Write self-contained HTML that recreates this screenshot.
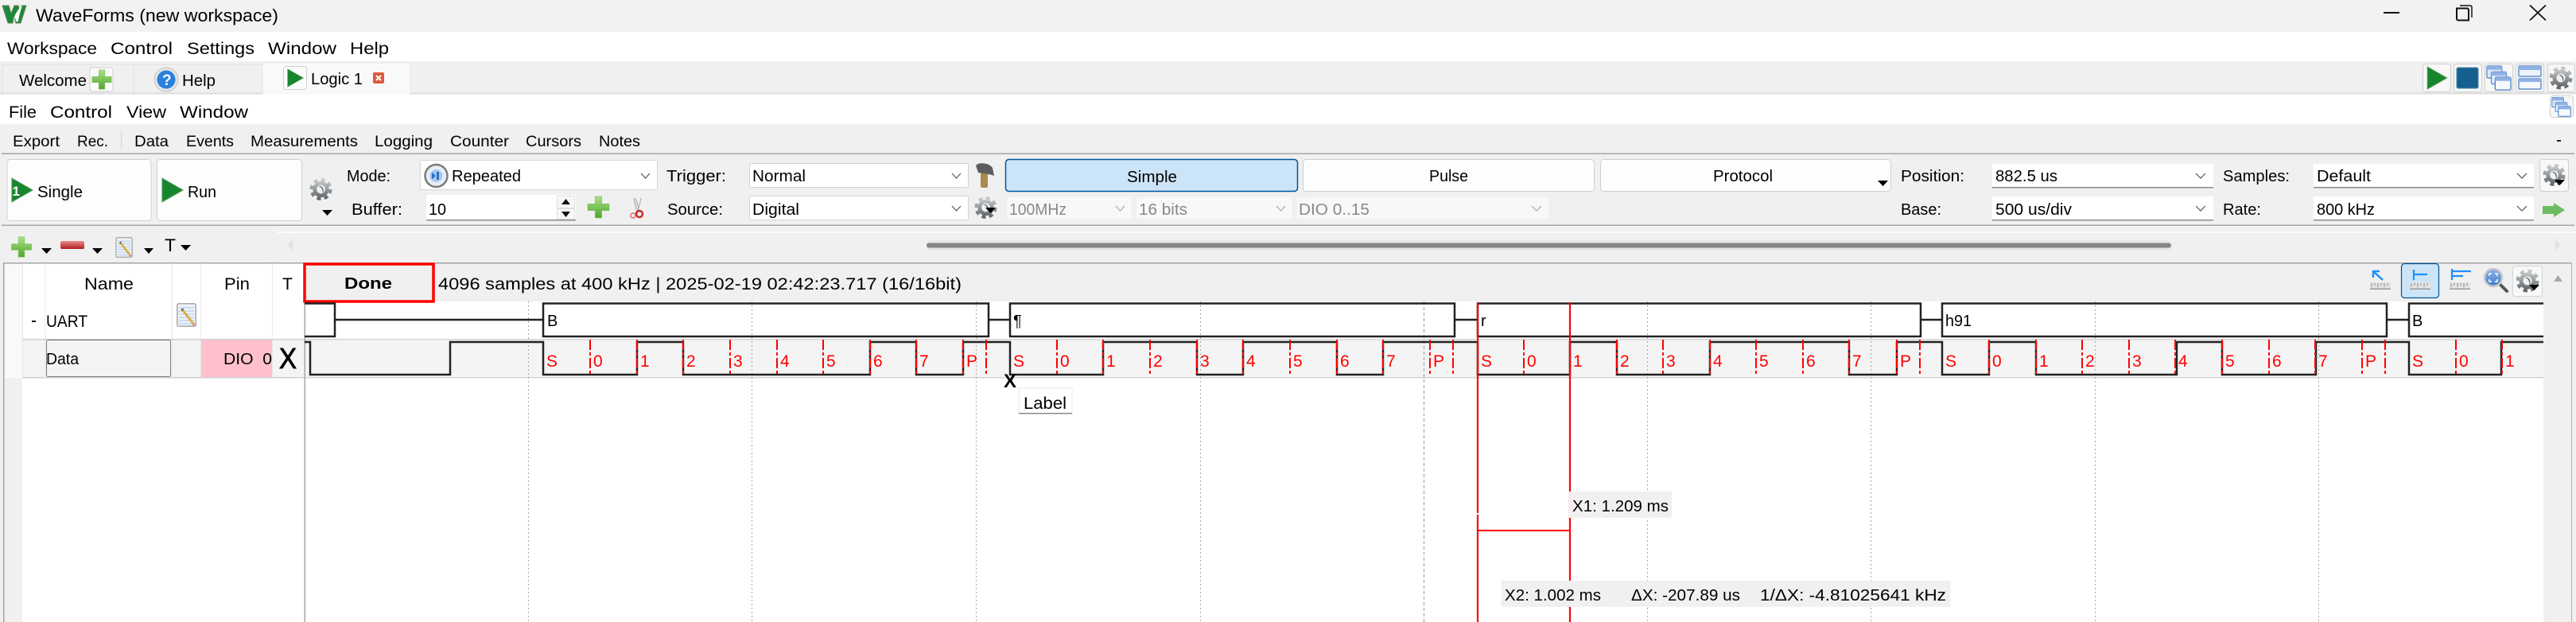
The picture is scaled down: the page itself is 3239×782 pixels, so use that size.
<!DOCTYPE html>
<html><head><meta charset="utf-8"><title>WaveForms</title>
<style>
html,body{margin:0;padding:0;background:#f0f0f0;width:3239px;height:782px;overflow:hidden}
svg{display:block}
text{font-family:"Liberation Sans",sans-serif;font-size:20px;fill:#000}
.r text{fill:#f00;font-size:21px}
.g text, text.g{fill:#888}
</style></head><body>
<svg width="3239" height="782" viewBox="0 0 3239 782" xmlns="http://www.w3.org/2000/svg">
<defs>
<linearGradient id="gp" x1="0" y1="0" x2="0" y2="1"><stop offset="0" stop-color="#a9e184"/><stop offset="1" stop-color="#4ea62d"/></linearGradient>
<linearGradient id="gr" x1="0" y1="0" x2="0" y2="1"><stop offset="0" stop-color="#ea8d8d"/><stop offset="1" stop-color="#b01c1c"/></linearGradient>
<linearGradient id="gg" x1="0" y1="0" x2="0" y2="1"><stop offset="0" stop-color="#c5c9cc"/><stop offset="1" stop-color="#62686c"/></linearGradient>
<linearGradient id="gb" x1="0" y1="0" x2="0" y2="1"><stop offset="0" stop-color="#8db4e4"/><stop offset="1" stop-color="#3f7cc4"/></linearGradient>
<symbol id="plus" viewBox="0 0 30 30"><path d="M11 2h8v9h9v8h-9v9h-8v-9H2v-8h9z" fill="url(#gp)" stroke="#7dbb5e" stroke-width=".6"/></symbol>
<symbol id="play" viewBox="0 0 30 34"><path d="M1 1L29 17L1 33Z" fill="#17852c" stroke="#5fa56c" stroke-width="1"/></symbol>
<symbol id="gear" viewBox="0 0 30 30"><circle cx="15" cy="15" r="12" fill="none" stroke="url(#gg)" stroke-width="5" stroke-dasharray="5 4.42"/><circle cx="15" cy="15" r="10.5" fill="url(#gg)"/><circle cx="15" cy="15" r="5.5" fill="#f2f2f2"/><path d="M12 11a5.5 5.5 0 0 1 5 9a7 7 0 0 0-5-9z" fill="#4b5054"/></symbol>
<symbol id="note" viewBox="0 0 25 30"><rect x=".8" y=".8" width="23.4" height="28.4" rx="2" fill="#eef1f7" stroke="#a8a8a8" stroke-width="1.5"/><path d="M3 6h19M3 10h19M3 14h19M3 18h19M3 22h19M3 26h19" stroke="#a9c6ee" stroke-width="1"/><path d="M7 8L21 26" stroke="#d9b23d" stroke-width="3"/><path d="M6.5 7.500L8 9" stroke="#555" stroke-width="3"/><path d="M21 26l1.500 2" stroke="#e67ba8" stroke-width="3"/></symbol>
<symbol id="win" viewBox="0 0 34 34"><rect x="1" y="1" width="20" height="16" rx="1.500" fill="#dfe9f7" stroke="#5d8fd2" stroke-width="1.500"/><rect x="1" y="1" width="20" height="5" fill="#8fb2e3"/><rect x="7" y="9" width="20" height="16" rx="1.500" fill="#eaf1fb" stroke="#5d8fd2" stroke-width="1.500"/><rect x="7" y="9" width="20" height="5" fill="#8fb2e3"/><rect x="12" y="16" width="21" height="17" rx="1.500" fill="#f7f9fd" stroke="#4f84cb" stroke-width="1.500"/><rect x="12" y="16" width="21" height="5" fill="#8fb2e3"/></symbol>
<symbol id="ruler" viewBox="0 0 26 9"><rect width="26" height="9" fill="#e4e4e4"/><path d="M2 0v5M6 0v3M10 0v5M14 0v3M18 0v5M22 0v3" stroke="#8a8a8a" stroke-width="1" transform="translate(0 1)"/><rect y="7.500" width="26" height="1.500" fill="#9a9a9a"/></symbol>
</defs>

<!-- base -->
<rect width="3239" height="782" fill="#f0f0f0"/>
<!-- title bar -->
<rect width="3239" height="40" fill="#f2f2f2"/>
<path d="M3 7H11L14 17L18 7H23L25 14L27 7H33L26 29H20L18 22L16 29H10Z" fill="#1b8a3a" stroke="#6f7f5a" stroke-width="1"/>
<path d="M16 27c2-7 5-14 12-20-2 6-4 12-5 20h-3l-1-5z" fill="#fff"/>
<text x="45" y="27" font-size="22" style="font-size:22px" textLength="305" lengthAdjust="spacingAndGlyphs">WaveForms (new workspace)</text>
<rect x="2997" y="15" width="20" height="2" fill="#111"/>
<path d="M3089 10.500h13a2 2 0 0 1 2 2v13a0 0 0 0 1 0 0h-13a2 2 0 0 1-2-2v-13z" fill="none" stroke="#111" stroke-width="2"/>
<path d="M3093 7h13a2 2 0 0 1 2 2v13" fill="none" stroke="#111" stroke-width="1.500"/>
<path d="M3181 6.500l20 19M3201 6.500l-20 19" stroke="#111" stroke-width="1.800"/>

<!-- menu 1 -->
<rect y="40" width="3239" height="37" fill="#fff"/>
<g style="font-size:21px">
<text x="9" y="68" style="font-size:21px" textLength="113" lengthAdjust="spacingAndGlyphs">Workspace</text>
<text x="139" y="68" style="font-size:21px" textLength="78" lengthAdjust="spacingAndGlyphs">Control</text>
<text x="235" y="68" style="font-size:21px" textLength="85" lengthAdjust="spacingAndGlyphs">Settings</text>
<text x="337" y="68" style="font-size:21px" textLength="86" lengthAdjust="spacingAndGlyphs">Window</text>
<text x="440" y="68" style="font-size:21px" textLength="49" lengthAdjust="spacingAndGlyphs">Help</text>
</g>

<!-- tabs -->
<rect y="77" width="3239" height="41" fill="#f0f0f0"/>
<rect x="3" y="81" width="165" height="36" fill="#f0f0f0" stroke="#e0e0e0"/>
<rect x="168" y="81" width="162" height="36" fill="#f0f0f0" stroke="#e0e0e0"/>
<rect y="116.500" width="3239" height="2" fill="#dcdcdc"/>
<rect x="330" y="79" width="186" height="40" fill="#f9f9f9" stroke="#e6e6e6"/>
<text x="24" y="108" style="font-size:20px" textLength="85" lengthAdjust="spacingAndGlyphs">Welcome</text>
<rect x="113" y="85" width="29" height="30" rx="3" fill="#fafafa" stroke="#cfcfcf"/>
<use href="#plus" x="114" y="86" width="28" height="28"/>
<circle cx="209" cy="100" r="15" fill="#e4e4e4" stroke="#c4c4c4"/>
<circle cx="209" cy="100" r="11.500" fill="#2a80dc"/>
<text x="204" y="107" fill="#fff" style="font-size:19px;font-weight:bold;fill:#fff">?</text>
<text x="229" y="108" style="font-size:20px" textLength="42" lengthAdjust="spacingAndGlyphs">Help</text>
<rect x="356.500" y="83.500" width="29" height="29" rx="3" fill="#fcfcfc" stroke="#cfcfcf"/>
<use href="#play" x="360" y="86" width="23" height="24"/>
<text x="391" y="106" style="font-size:20px" textLength="65" lengthAdjust="spacingAndGlyphs">Logic 1</text>
<rect x="469" y="91" width="14" height="14" rx="2" fill="#dd5a40"/>
<path d="M473 95l6 6M479 95l-6 6" stroke="#fff" stroke-width="2"/>
<g fill="#f7f7f7" stroke="#d0d0d0">
<rect x="3046.500" y="80.500" width="35" height="35" rx="3"/>
<rect x="3085.500" y="80.500" width="35" height="35" rx="3"/>
<rect x="3124.500" y="80.500" width="35" height="35" rx="3"/>
<rect x="3163.500" y="80.500" width="35" height="35" rx="3"/>
<rect x="3203.500" y="80.500" width="34" height="35" rx="3"/>
</g>
<use href="#play" x="3050" y="83" width="29" height="30"/>
<rect x="3089" y="85" width="27" height="26" rx="2" fill="#14608f" stroke="#4b86ad"/>
<use href="#win" x="3126" y="82" width="32" height="32"/>
<rect x="3167" y="83" width="28" height="13" rx="1" fill="#eef3fb" stroke="#5d8fd2" stroke-width="1.500"/><rect x="3167" y="83" width="28" height="5" fill="#8fb2e3"/>
<rect x="3167" y="99" width="28" height="13" rx="1" fill="#f4f7fc" stroke="#5d8fd2" stroke-width="1.500"/><rect x="3167" y="99" width="28" height="4" fill="#8fb2e3"/>
<use href="#gear" x="3205" y="83" width="30" height="30"/>

<!-- menu 2 -->
<rect y="118.500" width="3239" height="38" fill="#fff"/>
<text x="11" y="148" style="font-size:21px" textLength="35" lengthAdjust="spacingAndGlyphs">File</text>
<text x="63" y="148" style="font-size:21px" textLength="78" lengthAdjust="spacingAndGlyphs">Control</text>
<text x="159" y="148" style="font-size:21px" textLength="50" lengthAdjust="spacingAndGlyphs">View</text>
<text x="226" y="148" style="font-size:21px" textLength="86" lengthAdjust="spacingAndGlyphs">Window</text>
<rect x="3206.500" y="120.500" width="29" height="27" rx="3" fill="#f7f7f7" stroke="#d0d0d0"/>
<use href="#win" x="3208" y="122" width="25" height="25"/>

<!-- sub tabs -->
<rect y="156.500" width="3239" height="2" fill="#ececec"/>
<rect x="2" y="158" width="3235" height="35" fill="#f0f0f0"/>
<g>
<text x="16" y="184" style="font-size:19px" textLength="59" lengthAdjust="spacingAndGlyphs">Export</text>
<text x="97" y="184" style="font-size:19px" textLength="39" lengthAdjust="spacingAndGlyphs">Rec.</text>
<rect x="152" y="163" width="1" height="25" fill="#d4d4d4"/>
<text x="169" y="184" style="font-size:19px" textLength="43" lengthAdjust="spacingAndGlyphs">Data</text>
<text x="234" y="184" style="font-size:19px" textLength="60" lengthAdjust="spacingAndGlyphs">Events</text>
<text x="315" y="184" style="font-size:19px" textLength="135" lengthAdjust="spacingAndGlyphs">Measurements</text>
<text x="471" y="184" style="font-size:19px" textLength="73" lengthAdjust="spacingAndGlyphs">Logging</text>
<text x="566" y="184" style="font-size:19px" textLength="74" lengthAdjust="spacingAndGlyphs">Counter</text>
<text x="661" y="184" style="font-size:19px" textLength="70" lengthAdjust="spacingAndGlyphs">Cursors</text>
<text x="753" y="184" style="font-size:19px" textLength="52" lengthAdjust="spacingAndGlyphs">Notes</text>
</g>
<rect x="3215" y="176" width="5" height="2" fill="#222"/>
<rect x="2" y="192.500" width="3235" height="1.500" fill="#a6a6a6"/>

<!-- main toolbar -->
<rect x="9" y="200.500" width="181" height="77" rx="4" fill="#fdfdfd" stroke="#cfcfcf"/>
<rect x="197.500" y="200.500" width="182" height="77" rx="4" fill="#fdfdfd" stroke="#cfcfcf"/>
<use href="#play" x="13" y="223" width="30" height="32"/>
<text x="15.500" y="246" style="font-size:17px;font-weight:bold;fill:#fff">1</text>
<text x="47" y="248" textLength="57" lengthAdjust="spacingAndGlyphs" style="font-size:20px">Single</text>
<use href="#play" x="202" y="223" width="30" height="32"/>
<text x="236" y="248" textLength="36" lengthAdjust="spacingAndGlyphs" style="font-size:20px">Run</text>
<use href="#gear" x="389" y="223" width="29" height="30"/>
<path d="M405 264h13l-6.500 7z" fill="#000"/>

<text x="436" y="228" textLength="55" lengthAdjust="spacingAndGlyphs">Mode:</text>
<text x="442" y="270" textLength="64" lengthAdjust="spacingAndGlyphs">Buffer:</text>
<rect x="528.500" y="201.500" width="298" height="37" rx="2" fill="#fff" stroke="#d6d6d6"/>
<circle cx="548.500" cy="221" r="14" fill="#e8eef6" stroke="#7b7b7b" stroke-width="2.500"/>
<circle cx="548.500" cy="221" r="8" fill="#a9c8ef"/>
<path d="M543 216.500l5 4.500-5 4.500zM549 216h3v10h-3z" fill="#2d70c4"/>
<text x="568" y="228" textLength="87" lengthAdjust="spacingAndGlyphs">Repeated</text>
<path d="M806 218l5.500 6 5.500-6" fill="none" stroke="#555" stroke-width="1.200"/>
<rect x="536" y="245" width="188" height="32" fill="#fff"/>
<rect x="536" y="276" width="188" height="1.500" fill="#8a8a8a"/>
<text x="539" y="270" textLength="22" lengthAdjust="spacingAndGlyphs">10</text>
<rect x="700.500" y="246.500" width="22" height="15" fill="#f8f8f8" stroke="#ddd"/>
<rect x="700.500" y="262.500" width="22" height="13" fill="#f8f8f8" stroke="#ddd"/>
<path d="M706 257l5.500-7 5.500 7zM706 266l5.500 7 5.500-7z" fill="#111"/>
<use href="#plus" x="737" y="245" width="31" height="31"/>
<path d="M797 250c1 7 3 12 4 16l2 0c0-5-1-11-4-16zM806 249c-1 6-3 12-4 17" fill="#ddd" stroke="#aaa"/>
<circle cx="804" cy="269" r="4" fill="none" stroke="#c92a2a" stroke-width="2.500"/>
<circle cx="796" cy="271" r="3" fill="none" stroke="#c92a2a" stroke-width="2" opacity=".5"/>

<text x="838" y="228" textLength="75" lengthAdjust="spacingAndGlyphs">Trigger:</text>
<text x="839" y="270" textLength="70" lengthAdjust="spacingAndGlyphs">Source:</text>
<rect x="942.500" y="205.500" width="275" height="30" rx="2" fill="#fff" stroke="#d2d2d2"/>
<rect x="942.500" y="246.500" width="275" height="30" rx="2" fill="#fff" stroke="#d2d2d2"/>
<text x="946" y="228" textLength="67" lengthAdjust="spacingAndGlyphs">Normal</text>
<text x="946" y="270" textLength="59" lengthAdjust="spacingAndGlyphs">Digital</text>
<path d="M1197 218l5.500 6 5.500-6M1197 259l5.500 6 5.500-6" fill="none" stroke="#555" stroke-width="1.200"/>
<rect x="1233" y="213" width="9" height="23" rx="2" fill="#a98a4f"/>
<path d="M1227 208c3-4 16-4 21 3l2 10c-6-2-12-3-20-4z" fill="#5d5d60"/>
<use href="#gear" x="1225" y="246" width="29" height="30"/>
<path d="M1239 261h13l-6.500 7z" fill="#000"/>
<g fill="#f8f8f8" stroke="#ececec">
<rect x="1265.500" y="247" width="158" height="29"/>
<rect x="1428.500" y="247" width="197" height="29"/>
<rect x="1630" y="247" width="318" height="29"/>
</g>
<text class="g" x="1269" y="270" textLength="72" lengthAdjust="spacingAndGlyphs">100MHz</text>
<text class="g" x="1432" y="270" textLength="61" lengthAdjust="spacingAndGlyphs">16 bits</text>
<text class="g" x="1633" y="270" textLength="89" lengthAdjust="spacingAndGlyphs">DIO 0..15</text>
<path d="M1403 259l5.500 6 5.500-6M1605 259l5.500 6 5.500-6M1926 259l6 6 6-6" fill="none" stroke="#aaa" stroke-width="1.200"/>
<rect x="1264.500" y="200.500" width="367" height="40" rx="4" fill="#cce4f7" stroke="#005499" stroke-width="1.500"/>
<rect x="1638.500" y="200.500" width="366" height="40" rx="4" fill="#fdfdfd" stroke="#cfcfcf"/>
<rect x="2012.500" y="200.500" width="365" height="40" rx="4" fill="#fdfdfd" stroke="#cfcfcf"/>
<text x="1417" y="229" textLength="63" lengthAdjust="spacingAndGlyphs">Simple</text>
<text x="1797" y="228" textLength="49" lengthAdjust="spacingAndGlyphs">Pulse</text>
<text x="2154" y="228" textLength="75" lengthAdjust="spacingAndGlyphs">Protocol</text>
<path d="M2361 227h13l-6.500 7z" fill="#000"/>

<text x="2390" y="228" textLength="80" lengthAdjust="spacingAndGlyphs">Position:</text>
<text x="2390" y="270" textLength="51" lengthAdjust="spacingAndGlyphs">Base:</text>
<text x="2795" y="228" textLength="84" lengthAdjust="spacingAndGlyphs">Samples:</text>
<text x="2795" y="270" textLength="48" lengthAdjust="spacingAndGlyphs">Rate:</text>
<g fill="#fff">
<rect x="2505" y="206" width="278" height="29"/>
<rect x="2505" y="247" width="278" height="29"/>
<rect x="2909" y="206" width="277" height="29"/>
<rect x="2909" y="247" width="277" height="29"/>
</g>
<g fill="#8a8a8a">
<rect x="2505" y="235" width="278" height="1.500"/>
<rect x="2505" y="276" width="278" height="1.500"/>
<rect x="2909" y="235" width="277" height="1.500"/>
<rect x="2909" y="276" width="277" height="1.500"/>
</g>
<text x="2509" y="228" textLength="78" lengthAdjust="spacingAndGlyphs">882.5 us</text>
<text x="2509" y="270" textLength="96" lengthAdjust="spacingAndGlyphs">500 us/div</text>
<text x="2913" y="228" textLength="68" lengthAdjust="spacingAndGlyphs">Default</text>
<text x="2913" y="270" textLength="73" lengthAdjust="spacingAndGlyphs">800 kHz</text>
<path d="M2761 218l6 6 6-6M2761 259l6 6 6-6M3165 218l6 6 6-6M3165 259l6 6 6-6" fill="none" stroke="#555" stroke-width="1.200"/>
<rect x="3193.500" y="200.500" width="36" height="40" rx="3" fill="#f8f8f8" stroke="#cfcfcf"/>
<use href="#gear" x="3197" y="205" width="29" height="30"/>
<path d="M3212 226h13l-6.500 7z" fill="#000"/>
<path d="M3197 259h14v-4l14 9-14 9v-4h-14z" fill="#6cbb62"/>
<rect x="2" y="282.500" width="3235" height="1.500" fill="#a6a6a6"/>

<!-- toolbar 2 -->
<rect x="348" y="291" width="2891" height="2" fill="#fbfbfb"/>
<use href="#plus" x="12" y="296" width="30" height="29"/>
<path d="M52 312h13l-6.500 7zM116 312h13l-6.500 7zM181 312h12l-6 7zM227 308h13l-6.500 7z" fill="#000"/>
<rect x="76" y="303" width="30" height="10" rx="2" fill="url(#gr)"/>
<use href="#note" x="144" y="298" width="24" height="26"/>
<text x="207" y="316" style="font-size:22px" textLength="14" lengthAdjust="spacingAndGlyphs">T</text>
<path d="M368 301l-7 7 7 7z" fill="#e2e2e2"/>
<rect x="1165" y="302" width="1565" height="13" rx="6" fill="#e6e6e6"/>
<rect x="1165" y="305.500" width="1565" height="6" rx="3" fill="#858585"/>
<path d="M3213 301l7 7-7 7z" fill="#e2e2e2"/>
<rect x="4" y="330" width="3229" height="1.500" fill="#a0a4a8"/>
<rect x="3232.500" y="330" width="1.500" height="452" fill="#b0b0b0"/>
<rect x="4" y="330" width="1.500" height="452" fill="#a0a4a8"/>

<!-- grid left -->
<rect x="5.500" y="331.500" width="377.500" height="450.500" fill="#fff"/>
<rect x="5.500" y="331.500" width="22.500" height="143" fill="#f9f9f9"/>
<rect x="5.500" y="475" width="22.500" height="307" fill="#f0f0f0"/>
<rect x="28" y="427" width="355" height="47" fill="#f4f4f4"/>
<rect x="252" y="427" width="90" height="47" fill="#ffc0cb"/>
<g fill="#e8e8e8">
<rect x="28" y="331" width="1" height="144"/>
<rect x="56.500" y="331" width="1" height="144"/>
<rect x="216" y="331" width="1" height="144"/>
<rect x="252" y="331" width="1" height="144"/>
<rect x="342" y="331" width="1" height="144"/>
</g>
<rect x="28" y="426" width="355" height="1.500" fill="#d0d0d0"/>
<rect x="28" y="474" width="355" height="1.500" fill="#d0d0d0"/>
<text x="106" y="364" style="font-size:21px" textLength="62" lengthAdjust="spacingAndGlyphs">Name</text>
<text x="282" y="364" style="font-size:21px" textLength="32" lengthAdjust="spacingAndGlyphs">Pin</text>
<text x="355" y="364" style="font-size:21px" textLength="13" lengthAdjust="spacingAndGlyphs">T</text>
<rect x="40" y="403" width="5" height="2" fill="#111"/>
<text x="58" y="411" style="font-size:21px" textLength="52" lengthAdjust="spacingAndGlyphs">UART</text>
<use href="#note" x="222" y="381" width="25" height="30"/>
<rect x="58.500" y="427.500" width="156" height="46" rx="2" fill="none" stroke="#000" stroke-dasharray="1 1"/>
<text x="58" y="458" textLength="41" lengthAdjust="spacingAndGlyphs">Data</text>
<text x="281" y="458" textLength="61" lengthAdjust="spacingAndGlyphs" xml:space="preserve">DIO  0</text>
<text x="351" y="463" style="font-size:36px;stroke:#000;stroke-width:.9px" textLength="22" lengthAdjust="spacingAndGlyphs">X</text>

<!-- waveform panel -->
<rect x="383" y="379" width="2815" height="403" fill="#fff"/>
<rect x="383" y="427.500" width="2815" height="46.500" fill="#f4f4f4"/>
<rect x="383" y="426" width="2815" height="1.500" fill="#d4d4d4"/>
<rect x="383" y="474" width="2815" height="1.500" fill="#d4d4d4"/>
<rect x="382.500" y="379" width="1.500" height="403" fill="#a6a6a6"/>
<!-- status -->
<rect x="383" y="331.500" width="2850" height="47.500" fill="#f0f0f0"/>
<rect x="3198" y="331.500" width="35" height="451" fill="#f0f0f0"/>
<rect x="383" y="332" width="162" height="47" fill="#f0f0f0" stroke="#f00" stroke-width="3.500"/>
<text x="433" y="363" textLength="60" lengthAdjust="spacingAndGlyphs" style="font-weight:bold;font-size:20px">Done</text>
<text x="551" y="364" style="font-size:21px" textLength="658" lengthAdjust="spacingAndGlyphs">4096 samples at 400 kHz | 2025-02-19 02:42:23.717 (16/16bit)</text>

<!-- grid lines -->
<g stroke="#a8a8a8" stroke-width="1" stroke-dasharray="2 3">
<path d="M664.500 379V782M945.500 379V782M1227.500 379V782M1509.500 379V782M2071.500 379V782M2352.500 379V782M2634.500 379V782M2915.500 379V782"/>
</g>
<path d="M1790.500 379V782" stroke="#999" stroke-width="1" stroke-dasharray="4 3"/>

<!-- bus -->
<g fill="none" stroke="#222" stroke-width="2.500">
<path d="M383 381.500H421V423H383"/>
<path d="M421 402H683"/>
<rect x="683" y="381.500" width="560" height="41.500"/>
<path d="M1243 402H1270"/>
<rect x="1270" y="381.500" width="559" height="41.500"/>
<path d="M1829 402H1858"/>
<rect x="1858" y="381.500" width="557" height="41.500"/>
<path d="M2415 402H2442"/>
<rect x="2442" y="381.500" width="559" height="41.500"/>
<path d="M3001 402H3029"/>
<path d="M3198 381.500H3029V423H3198"/>
</g>
<text x="688" y="410">B</text>
<text x="1274" y="410">¶</text>
<text x="1862" y="410">r</text>
<text x="2446" y="410" textLength="33" lengthAdjust="spacingAndGlyphs">h91</text>
<text x="3033" y="410">B</text>

<!-- digital -->
<path d="M383 430H390V471H566V430H683V471H801V430H859V471H1094V430H1152V471H1211V430H1270V471H1387V430H1505V471H1563V430H1681V471H1739V430H1858V471H1974V430H2033V471H2150V430H2325V471H2385V430H2442V471H2501V430H2560V471H2737V430H2794V471H2912V430H3029V471H3145V430H3198" fill="none" stroke="#222" stroke-width="2.500"/>
<path d="M742 427V472M801 427V472M859 427V472M918 427V472M977 427V472M1035 427V472M1094 427V472M1152 427V472M1211 427V472M1240 427V472M1329 427V472M1387 427V472M1446 427V472M1505 427V472M1563 427V472M1622 427V472M1681 427V472M1739 427V472M1798 427V472M1827 427V472M1916 427V472M1974 427V472M2033 427V472M2091 427V472M2150 427V472M2208 427V472M2267 427V472M2325 427V472M2385 427V472M2414 427V472M2501 427V472M2560 427V472M2618 427V472M2677 427V472M2735 427V472M2794 427V472M2853 427V472M2911 427V472M2970 427V472M2999 427V472M3088 427V472M3146 427V472" fill="none" stroke="#f00" stroke-width="2" stroke-dasharray="13 3 4 3"/>
<g class="r">
<text x="687" y="461">S</text><text x="746" y="461">0</text><text x="805" y="461">1</text><text x="863" y="461">2</text><text x="922" y="461">3</text><text x="981" y="461">4</text><text x="1039" y="461">5</text><text x="1098" y="461">6</text><text x="1156" y="461">7</text><text x="1215" y="461">P</text>
<text x="1274" y="461">S</text><text x="1333" y="461">0</text><text x="1391" y="461">1</text><text x="1450" y="461">2</text><text x="1509" y="461">3</text><text x="1567" y="461">4</text><text x="1626" y="461">5</text><text x="1685" y="461">6</text><text x="1743" y="461">7</text><text x="1802" y="461">P</text>
<text x="1862" y="461">S</text><text x="1920" y="461">0</text><text x="1978" y="461">1</text><text x="2037" y="461">2</text><text x="2095" y="461">3</text><text x="2154" y="461">4</text><text x="2212" y="461">5</text><text x="2271" y="461">6</text><text x="2329" y="461">7</text><text x="2389" y="461">P</text>
<text x="2446" y="461">S</text><text x="2505" y="461">0</text><text x="2564" y="461">1</text><text x="2622" y="461">2</text><text x="2681" y="461">3</text><text x="2739" y="461">4</text><text x="2798" y="461">5</text><text x="2857" y="461">6</text><text x="2915" y="461">7</text><text x="2974" y="461">P</text>
<text x="3033" y="461">S</text><text x="3092" y="461">0</text><text x="3150" y="461">1</text>
</g>

<!-- X / Label -->
<text x="1262" y="487" style="font-size:24px;font-weight:bold" textLength="16" lengthAdjust="spacingAndGlyphs">X</text>
<rect x="1281" y="488" width="67" height="32" fill="#fff" stroke="#e8e8e8"/>
<rect x="1281" y="519" width="67" height="1.500" fill="#8a8a8a"/>
<text x="1287" y="514" style="font-size:21px" textLength="54" lengthAdjust="spacingAndGlyphs">Label</text>

<!-- cursors -->
<path d="M1858 380V645M1858 647V782M1974 380V782" stroke="#f00" stroke-width="2.200" fill="none"/>
<rect x="1858" y="666" width="116" height="2" fill="#f00"/>
<rect x="1973" y="618" width="129" height="33" fill="#f0f0f0"/>
<text x="1977" y="643" textLength="121" lengthAdjust="spacingAndGlyphs">X1: 1.209 ms</text>
<rect x="1887.500" y="730" width="565" height="33" fill="#f0f0f0"/>
<text x="1892" y="755" textLength="121" lengthAdjust="spacingAndGlyphs">X2: 1.002 ms</text>
<text x="2051" y="755" textLength="137" lengthAdjust="spacingAndGlyphs">ΔX: -207.89 us</text>
<text x="2213" y="755" textLength="234" lengthAdjust="spacingAndGlyphs">1/ΔX: -4.81025641 kHz</text>

<!-- status right icons -->
<use href="#ruler" x="2980" y="355" width="26" height="9"/>
<path d="M2996 352L2985 342M2984 349V341H2992" fill="none" stroke="#1e90ff" stroke-width="2.500"/>
<rect x="3019.500" y="331.500" width="47" height="43" rx="4" fill="#cce4f7" stroke="#005499" stroke-width="1.200"/>
<use href="#ruler" x="3030" y="355" width="26" height="9"/>
<path d="M3035 339V352M3035 345H3052" fill="none" stroke="#1e90ff" stroke-width="2.200"/>
<use href="#ruler" x="3080" y="355" width="26" height="9"/>
<path d="M3083 338V352M3083 341H3107M3083 347H3097" fill="none" stroke="#1e90ff" stroke-width="2.200"/>
<path d="M3143 357L3152 366" stroke="#555" stroke-width="4" stroke-linecap="round"/>
<circle cx="3135" cy="349" r="11" fill="url(#gb)" stroke="#c9c9c9" stroke-width="2.500"/>
<path d="M3130 347v-3h3M3137 344h3v3M3140 351v3h-3M3133 354h-3v-3" fill="none" stroke="#fff" stroke-width="1.500"/>
<rect x="3159.500" y="334.500" width="37" height="38" rx="3" fill="#f8f8f8" stroke="#d4d4d4"/>
<use href="#gear" x="3163" y="338" width="30" height="30"/>
<path d="M3180 358h13l-6.500 7z" fill="#000"/>
<path d="M3211 354l5.500-8 5.500 8z" fill="#a8a8a8"/>
</svg>
</body></html>
